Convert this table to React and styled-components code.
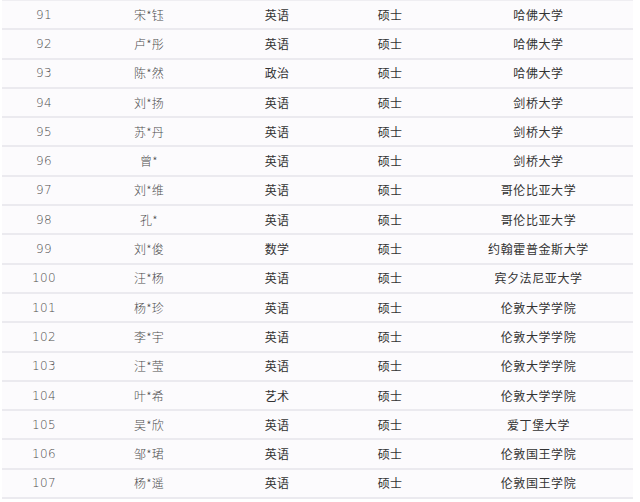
import styled, { createGlobalStyle } from "styled-components";

const GlobalStyle = createGlobalStyle`
    body {
        margin: 0;
        background: #ffffff;
        font-family: "Noto Sans CJK SC", "Noto Sans", sans-serif;
    }
`;

const rows = [
    [91, "宋*钰", "英语", "硕士", "哈佛大学"],
    [92, "卢*彤", "英语", "硕士", "哈佛大学"],
    [93, "陈*然", "政治", "硕士", "哈佛大学"],
    [94, "刘*扬", "英语", "硕士", "剑桥大学"],
    [95, "苏*丹", "英语", "硕士", "剑桥大学"],
    [96, "曾*", "英语", "硕士", "剑桥大学"],
    [97, "刘*维", "英语", "硕士", "哥伦比亚大学"],
    [98, "孔*", "英语", "硕士", "哥伦比亚大学"],
    [99, "刘*俊", "数学", "硕士", "约翰霍普金斯大学"],
    [100, "汪*杨", "英语", "硕士", "宾夕法尼亚大学"],
    [101, "杨*珍", "英语", "硕士", "伦敦大学学院"],
    [102, "李*宇", "英语", "硕士", "伦敦大学学院"],
    [103, "汪*莹", "英语", "硕士", "伦敦大学学院"],
    [104, "叶*希", "艺术", "硕士", "伦敦大学学院"],
    [105, "吴*欣", "英语", "硕士", "爱丁堡大学"],
    [106, "邹*珺", "英语", "硕士", "伦敦国王学院"],
    [107, "杨*遥", "英语", "硕士", "伦敦国王学院"],
];

const App = () => {
    return (
        <>
            <GlobalStyle />
            <Table>
                {rows.map(([no, name, subject, degree, school]) => (
                    <Row key={no}>
                        <Cell $light $latin>{no}</Cell>
                        <Cell $light>{name}</Cell>
                        <Cell>{subject}</Cell>
                        <Cell>{degree}</Cell>
                        <Cell $wide>{school}</Cell>
                    </Row>
                ))}
            </Table>
        </>
    );
};

const Table = styled.div`
    margin: 0 7px 0 2px;
    border-top: 1px solid #efeef2;
    background: #fcfbfd;
`;
const Row = styled.div`
    display: grid;
    grid-template-columns: 84px 126px 130px 96px 1fr;
    height: 27.3px;
    border-bottom: 2px solid #ebeaef;
    align-items: center;
`;
const Cell = styled.div`
    text-align: center;
    font-size: 12px;
    line-height: 1;
    color: ${(p) => (p.$light ? "#4d4d4d" : "#333333")};
    font-weight: ${(p) => (p.$light ? 300 : 400)};
    font-family: ${(p) =>
        p.$latin
            ? '"DejaVu Sans", "Noto Sans", sans-serif'
            : '"Noto Sans CJK SC", sans-serif'};
    letter-spacing: ${(p) => (p.$wide ? "0.6px" : "0.3px")};
    padding-left: ${(p) => (p.$wide ? "6px" : "0")};
`;

export default App;
